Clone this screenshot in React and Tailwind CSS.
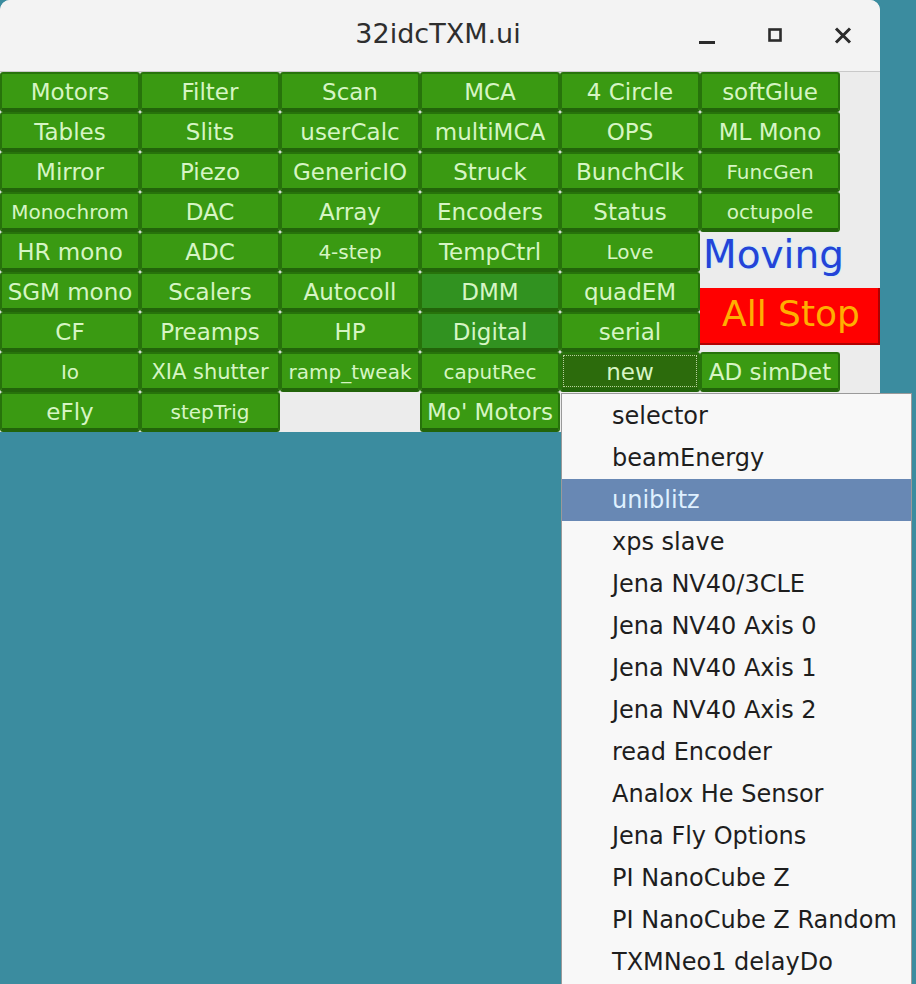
const rows = [
  ['Motors', 'Filter', 'Scan', 'MCA', '4 Circle', 'softGlue'],
  ['Tables', 'Slits', 'userCalc', 'multiMCA', 'OPS', 'ML Mono'],
  ['Mirror', 'Piezo', 'GenericIO', 'Struck', 'BunchClk', 'FuncGen'],
  ['Monochrom', 'DAC', 'Array', 'Encoders', 'Status', 'octupole'],
  ['HR mono', 'ADC', '4-step', 'TempCtrl', 'Love', null],
  ['SGM mono', 'Scalers', 'Autocoll', 'DMM', 'quadEM', null],
  ['CF', 'Preamps', 'HP', 'Digital', 'serial', null],
  ['Io', 'XIA shutter', 'ramp_tweak', 'caputRec', 'new', 'AD simDet'],
  ['eFly', 'stepTrig', '', "Mo' Motors", null, null],
];

const small = ['Monochrom', 'FuncGen', 'octupole', '4-step', 'Love', 'Io', 'ramp_tweak', 'caputRec', 'stepTrig'];
const alt = ['DMM', 'Digital'];

const menuItems = [
  'selector', 'beamEnergy', 'uniblitz', 'xps slave', 'Jena NV40/3CLE', 'Jena NV40 Axis 0',
  'Jena NV40 Axis 1', 'Jena NV40 Axis 2', 'read Encoder', 'Analox He Sensor',
  'Jena Fly Options', 'PI NanoCube Z', 'PI NanoCube Z Random', 'TXMNeo1 delayDo',
];

function GreenButton({ label }) {
  if (label === '') return <div className="h-[40px]" />;
  const isNew = label === 'new';
  let size = 'text-[23px]';
  if (small.includes(label)) size = 'text-[20px]';
  if (label === 'XIA shutter') size = 'text-[21px]';
  let bg = 'bg-[#3a9a12]';
  if (alt.includes(label)) bg = 'bg-[#319220]';
  if (isNew) bg = 'bg-[#2c6b0c]';
  return (
    <div className={`h-[40px] rounded-[3px] border-2 border-[#27730b] border-b-[4px] border-b-[#22640a] ${bg} flex overflow-hidden whitespace-nowrap`}>
      <div
        className={`flex-1 flex items-center justify-center ${isNew ? 'm-px border border-dotted border-[#b4d49c]' : ''}`}
      >
        <span className={`${size} leading-none text-[#d6f5c4] pt-[2px]`}>{label}</span>
      </div>
    </div>
  );
}

export default function App() {
  return (
    <div className="relative w-[916px] h-[984px] overflow-hidden bg-[#3b8c9f] font-['DejaVu_Sans',sans-serif]">
      <div className="w-[880px] rounded-t-[10px] bg-[#ececec] overflow-hidden">
        <div className="h-[72px] bg-[#f3f3f3] border-b border-[#c9c9c9] flex items-center">
          <div className="flex-1" />
          <div className="text-[27px] text-[#2e2e2e] pb-[3px] pl-[24px]">32idcTXM.ui</div>
          <div className="flex-1 flex items-center justify-end gap-[50px] pr-[28px]">
            <svg width="18" height="18" viewBox="0 0 18 18">
              <rect x="1" y="14" width="16" height="3" fill="#2b2b2b" />
            </svg>
            <svg width="18" height="18" viewBox="0 0 18 18">
              <rect x="3.5" y="2.5" width="11" height="11" fill="none" stroke="#2b2b2b" strokeWidth="2.6" />
            </svg>
            <svg width="18" height="18" viewBox="0 0 18 18">
              <path d="M2 1.5 L16 15.5 M16 1.5 L2 15.5" stroke="#2b2b2b" strokeWidth="3" />
            </svg>
          </div>
        </div>
        <div className="grid grid-cols-[repeat(6,140px)_40px] grid-rows-[repeat(9,40px)]">
          {rows.map((r, ri) =>
            r.map((label, ci) =>
              label === null ? null : (
                <div key={`${ri}-${ci}`} style={{ gridRow: ri + 1, gridColumn: ci + 1 }}>
                  <GreenButton label={label} />
                </div>
              )
            )
          )}
          <div className="row-start-5 col-start-6 col-span-2 flex items-center pl-[3px] pt-[4px]">
            <span className="text-[39px] leading-none text-[#2443d8] [text-shadow:0_0_2px_#9ff4ff]">Moving</span>
          </div>
          <div className="row-start-6 row-span-2 col-start-6 col-span-2 flex items-center pt-[8px]">
            <div className="w-full h-[57px] bg-[#ff0000] border-b-2 border-r-2 border-[#b00000] flex items-center justify-center">
              <span className="text-[36px] leading-none text-[#ffae00] pb-[2px] pl-[4px]">All Stop</span>
            </div>
          </div>
        </div>
      </div>

      <div className="absolute left-[561px] top-[393px] w-[351px] h-[600px] bg-[#f8f8f8] border border-[#9a9a9a] py-px">
        {menuItems.map((item) => (
          <div
            key={item}
            className={`h-[42px] flex items-center pl-[50px] text-[24px] whitespace-nowrap ${
              item === 'uniblitz' ? 'bg-[#6888b4] text-[#dff0ff]' : 'text-[#1e1e1e]'
            }`}
          >
            {item}
          </div>
        ))}
      </div>
    </div>
  );
}
